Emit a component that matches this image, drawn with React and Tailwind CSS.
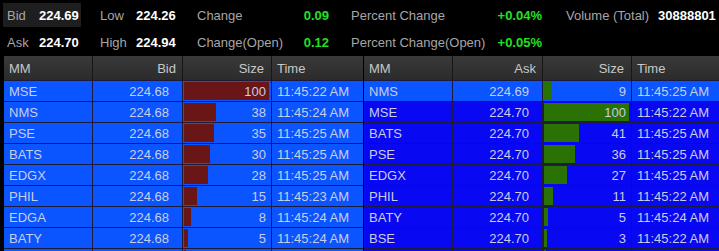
const bids = [
  ["MSE", "224.68", 100, "11:45:22 AM"],
  ["NMS", "224.68", 38, "11:45:24 AM"],
  ["PSE", "224.68", 35, "11:45:25 AM"],
  ["BATS", "224.68", 30, "11:45:25 AM"],
  ["EDGX", "224.68", 28, "11:45:25 AM"],
  ["PHIL", "224.68", 15, "11:45:23 AM"],
  ["EDGA", "224.68", 8, "11:45:24 AM"],
  ["BATY", "224.68", 5, "11:45:24 AM"],
  ["", "", 2, ""],
];

const asks = [
  ["NMS", "224.69", 9, "11:45:25 AM"],
  ["MSE", "224.70", 100, "11:45:22 AM"],
  ["BATS", "224.70", 41, "11:45:25 AM"],
  ["PSE", "224.70", 36, "11:45:25 AM"],
  ["EDGX", "224.70", 27, "11:45:25 AM"],
  ["PHIL", "224.70", 11, "11:45:22 AM"],
  ["BATY", "224.70", 5, "11:45:24 AM"],
  ["BSE", "224.70", 3, "11:45:22 AM"],
  ["", "", 2, ""],
];

function Stat({ label, value, labelW, green, className = "" }) {
  return (
    <div className={`flex items-center h-6 ${className}`}>
      <span className="text-[#a6a6a6]" style={{ width: labelW }}>
        {label}
      </span>
      <span className={`font-bold ${green ? "text-[#22e022] ml-auto" : "text-white"}`}>{value}</span>
    </div>
  );
}

function Book({ side, rows }) {
  const bar = side === "Bid" ? "bg-[#6b1616]" : "bg-[#2a7204]";
  return (
    <div className="w-[359px] shrink-0">
      <div className="grid grid-cols-[89px_90px_89px_91px] h-[24px] bg-gradient-to-b from-[#3a3a3a] to-[#2b2b2b] text-[#c8c8c8]">
        <div className="flex items-center pl-[5px] border-r border-[#161616]">MM</div>
        <div className="flex items-center justify-end pr-[6px] border-r border-[#161616]">{side}</div>
        <div className="flex items-center justify-end pr-[7px] border-r border-[#161616]">Size</div>
        <div className="flex items-center pl-[5px]">Time</div>
      </div>
      {rows.map((r, i) => {
        const bg = side === "Ask" && i > 0 ? "bg-[#0808f2]" : "bg-[#0a55ff]";
        return (
          <div
            key={i}
            className={`grid grid-cols-[89px_90px_89px_91px] h-[21px] border-t border-[#1c1c3a] ${bg} text-[#c9cde6]`}
          >
            <div className="flex items-center pl-[5px] border-r border-[#1c1c3a]">{r[0]}</div>
            <div className="flex items-center justify-end pr-[13px] border-r border-[#1c1c3a]">{r[1]}</div>
            <div className="relative flex items-center justify-end pr-[5px] border-r border-[#1c1c3a]">
              <div
                className={`absolute left-[1px] top-[1px] bottom-[1px] ${bar}`}
                style={{ width: (r[2] / 100) * 85 }}
              />
              <span className="relative">{r[0] ? r[2] : ""}</span>
            </div>
            <div className="flex items-center pl-[5px] whitespace-nowrap">{r[3]}</div>
          </div>
        );
      })}
    </div>
  );
}

export default function App() {
  return (
    <div className="w-[719px] h-[251px] overflow-hidden bg-black text-[13px] font-['Liberation_Sans',Arial,sans-serif] leading-none">
      <div className="h-[56px] pt-[3px] flex flex-col gap-[3px]">
        <div className="flex">
          <div className="ml-[3px] w-[78px] pl-[4px] bg-[#1e1e1e]">
            <Stat label="Bid" value="224.69" labelW={32} />
          </div>
          <Stat label="Low" value="224.26" labelW={36} className="ml-[19px] w-[97px]" />
          <Stat label="Change" value="0.09" green className="w-[132px]" />
          <Stat label="Percent Change" value="+0.04%" green className="ml-[22px] w-[191px]" />
          <Stat label="Volume (Total)" value="30888801" labelW={92} className="ml-[24px]" />
        </div>
        <div className="flex">
          <div className="ml-[3px] w-[78px] pl-[4px]">
            <Stat label="Ask" value="224.70" labelW={32} />
          </div>
          <Stat label="High" value="224.94" labelW={36} className="ml-[19px] w-[97px]" />
          <Stat label="Change(Open)" value="0.12" green className="w-[132px]" />
          <Stat label="Percent Change(Open)" value="+0.05%" green className="ml-[22px] w-[191px]" />
        </div>
      </div>
      <div className="flex pl-[4px] gap-[0px]">
        <Book side="Bid" rows={bids} />
        <div className="w-px shrink-0 bg-black" />
        <Book side="Ask" rows={asks} />
      </div>
    </div>
  );
}
